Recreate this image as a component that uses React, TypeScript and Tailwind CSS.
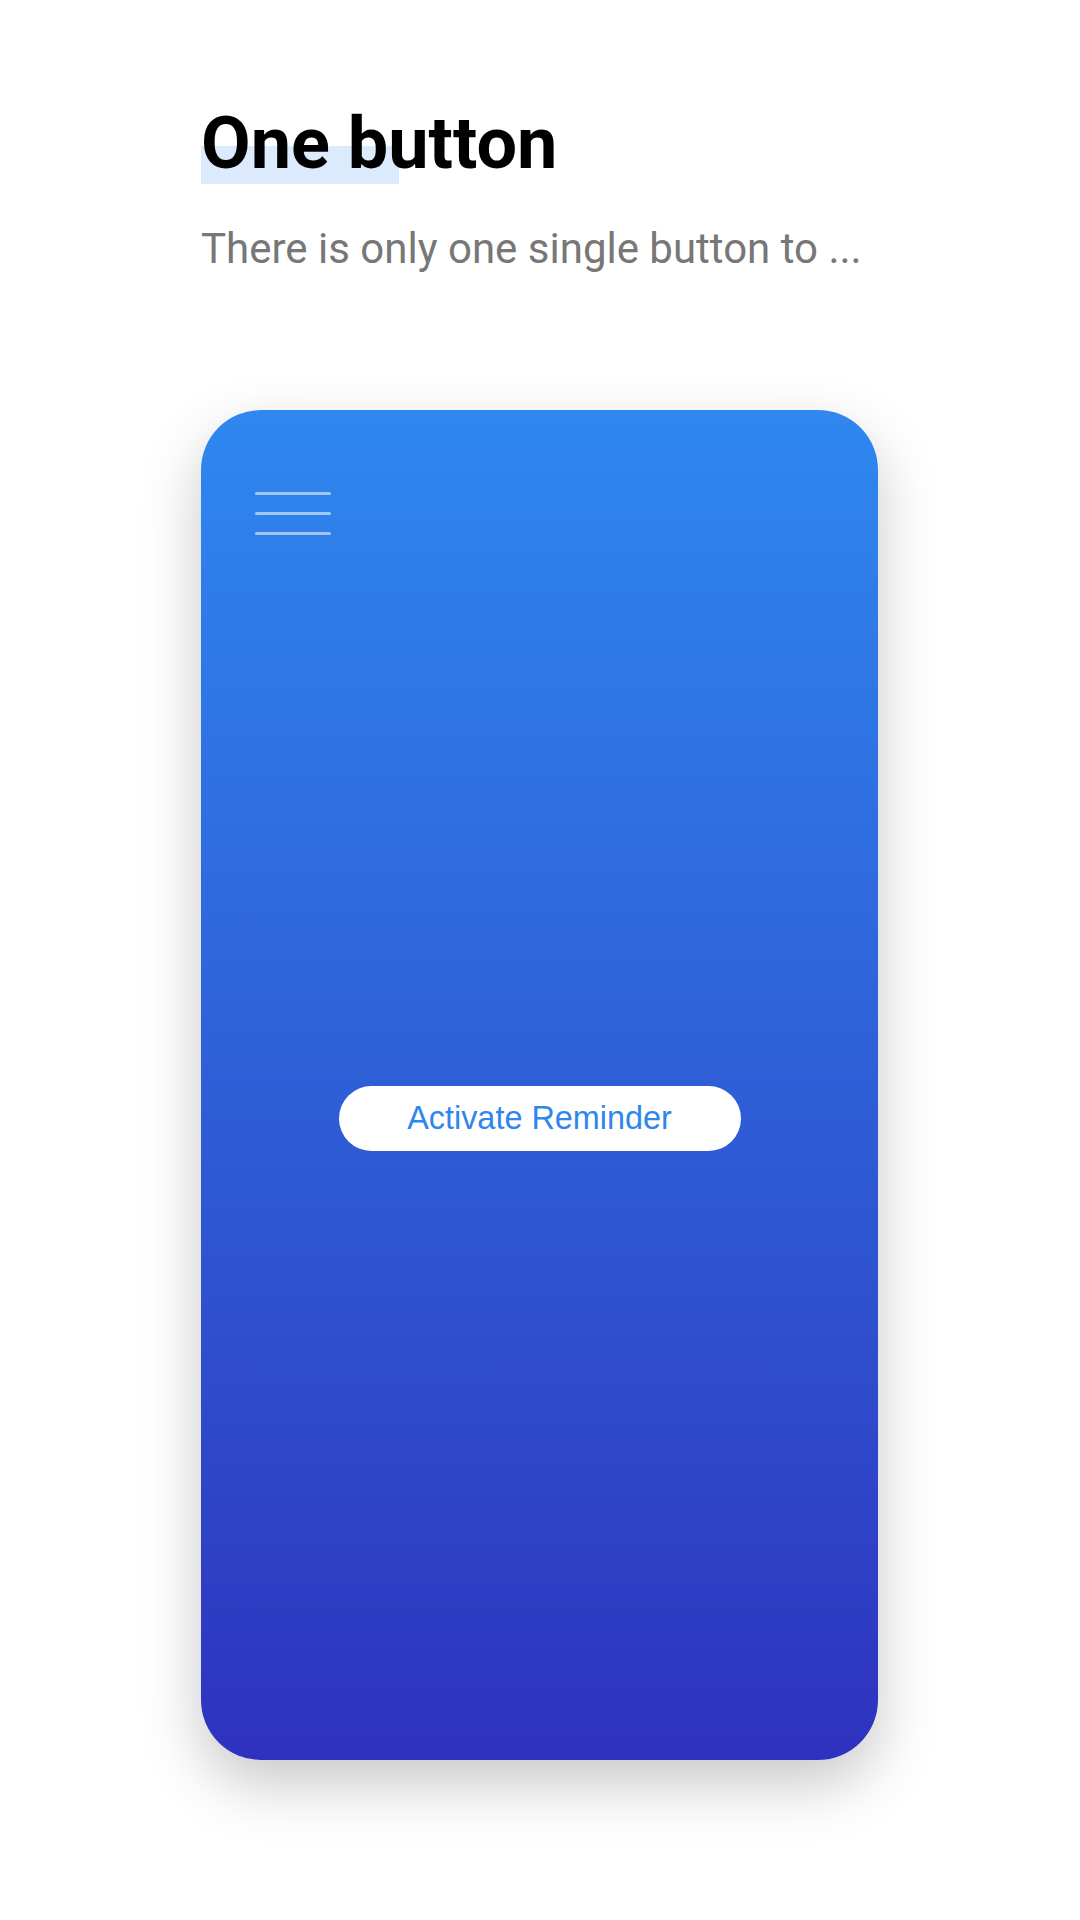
export default function App() {
  return (
    <div className="min-h-[1920px] w-[1080px] bg-white font-['Roboto',sans-serif]">
      <div className="pl-[201px] pt-[108px]">
        {/* Title with marker highlight */}
        <h1 className="relative inline-block text-[72px] font-bold leading-none text-black">
          <span className="absolute left-0 top-[38px] h-[38px] w-[198px] bg-[#dbeafc]" />
          <span className="relative">One button</span>
        </h1>
        <p className="mt-[48px] text-[42px] leading-none text-[#777777]">
          There is only one single button to ...
        </p>
      </div>

      {/* Phone mock */}
      <div className="ml-[201px] mt-[140px] flex h-[1350px] w-[677px] flex-col rounded-[60px] bg-gradient-to-b from-[#2f87ef] to-[#2e31bf] shadow-[0_24px_60px_rgba(0,0,0,0.22)]">
        <div className="flex flex-col gap-[17px] pl-[54px] pt-[82px]">
          <div className="h-[3px] w-[76px] rounded-full bg-white/55" />
          <div className="h-[3px] w-[76px] rounded-full bg-white/55" />
          <div className="h-[3px] w-[76px] rounded-full bg-white/55" />
        </div>
        <div className="flex flex-1 items-center justify-center pb-[58px]">
          <button className="flex h-[65px] w-[402px] items-center justify-center rounded-full bg-white font-['Liberation_Sans',Arial,sans-serif] text-[32.4px] text-[#2f86ee]">
            Activate Reminder
          </button>
        </div>
      </div>
    </div>
  );
}
